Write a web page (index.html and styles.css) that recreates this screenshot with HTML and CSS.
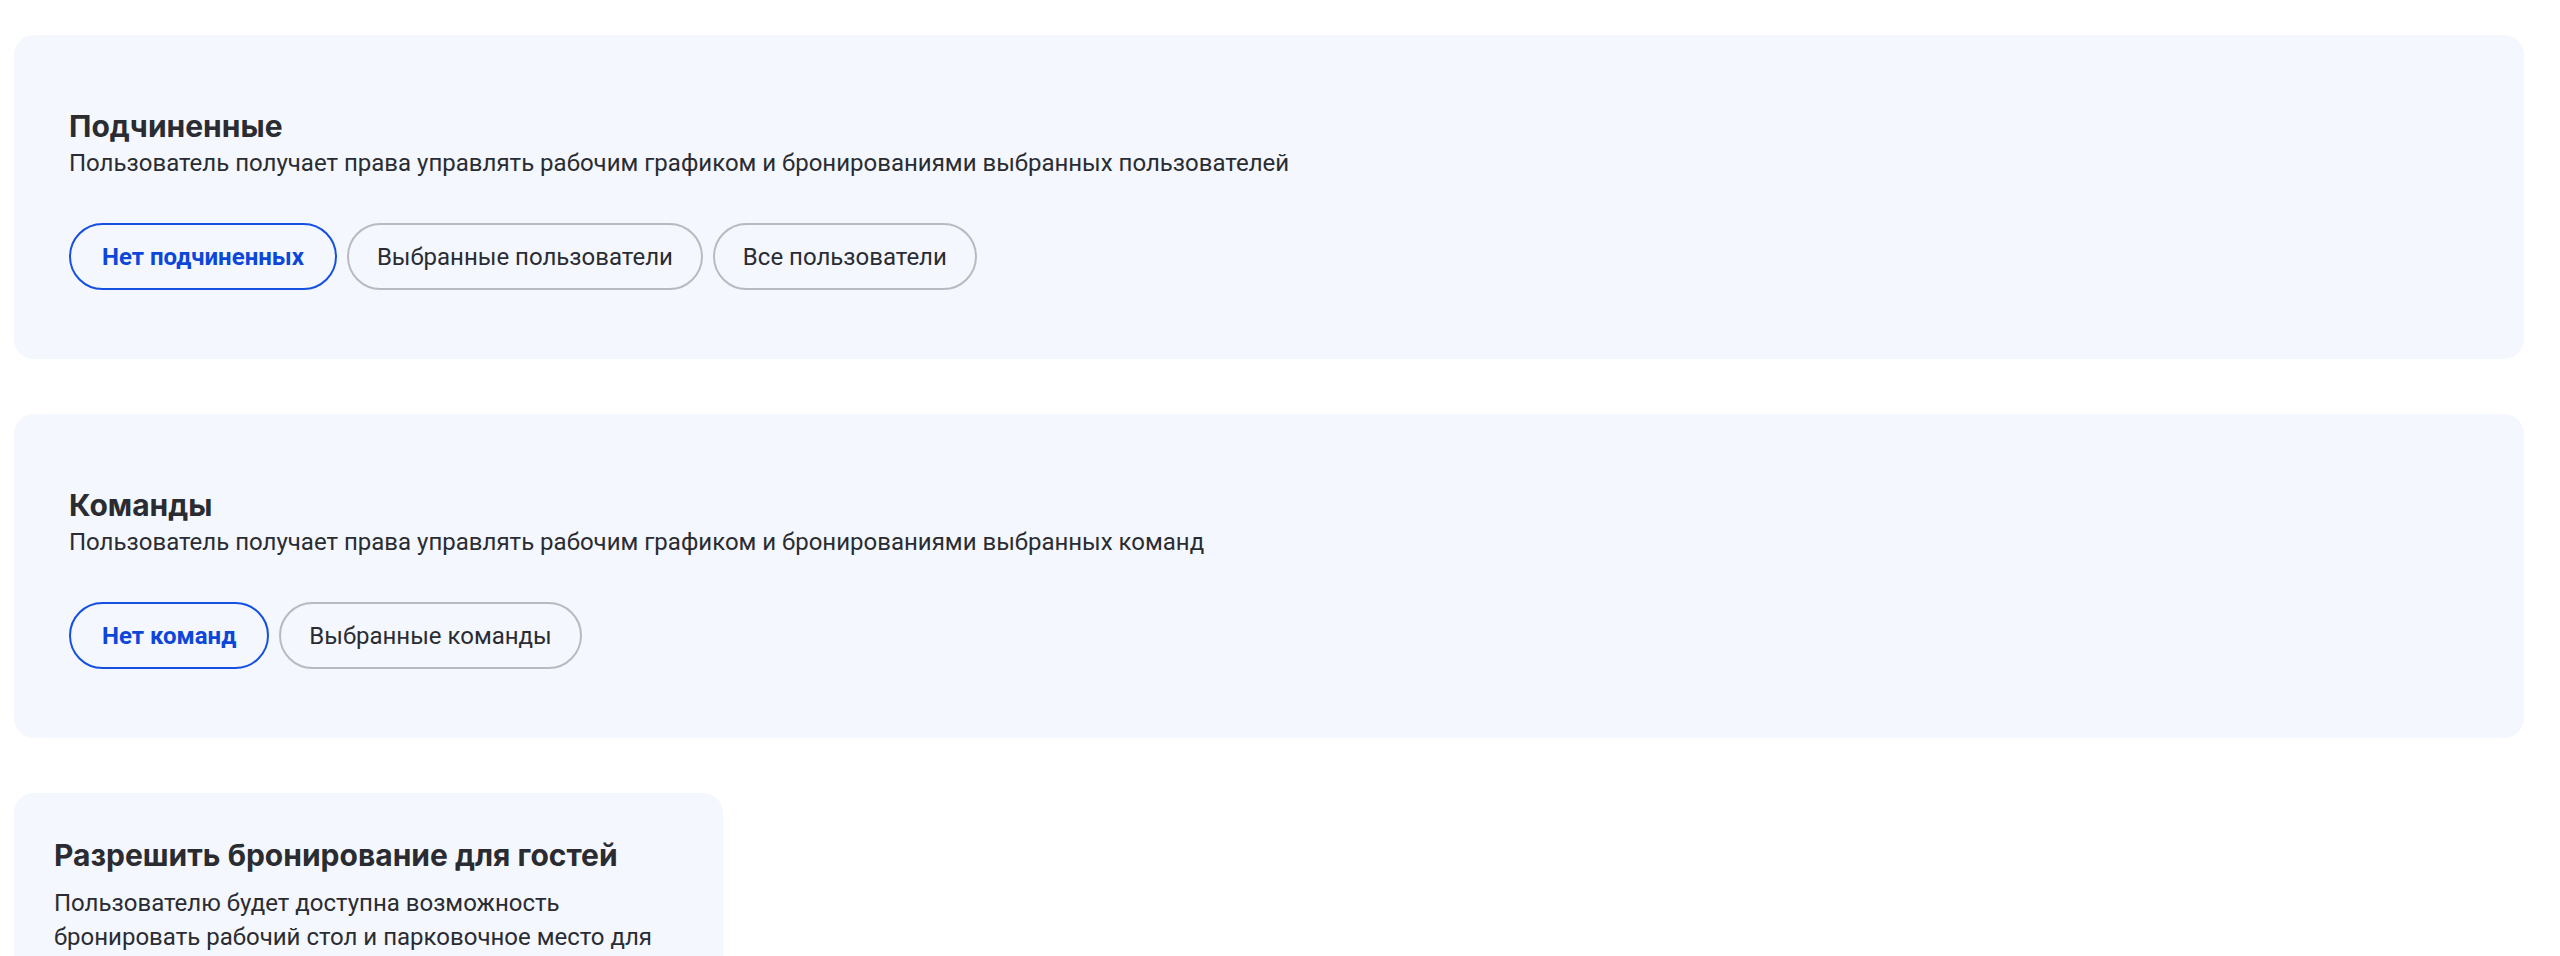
FILE: index.html
```html
<!DOCTYPE html>
<html lang="ru">
<head>
    <meta charset="UTF-8">
    <meta name="viewport" content="width=device-width, initial-scale=1.0">
    <title>Права пользователя</title>
    <link rel="stylesheet" href="styles.css">
</head>
<body>
    <div class="page">
        <section class="panel">
            <h2 class="panel-title">Подчиненные</h2>
            <p class="panel-text">Пользователь получает права управлять рабочим графиком и бронированиями выбранных пользователей</p>
            <div class="chips">
                <button type="button" class="chip active">Нет подчиненных</button>
                <button type="button" class="chip">Выбранные пользователи</button>
                <button type="button" class="chip">Все пользователи</button>
            </div>
        </section>

        <section class="panel">
            <h2 class="panel-title">Команды</h2>
            <p class="panel-text">Пользователь получает права управлять рабочим графиком и бронированиями выбранных команд</p>
            <div class="chips">
                <button type="button" class="chip active">Нет команд</button>
                <button type="button" class="chip">Выбранные команды</button>
            </div>
        </section>

        <section class="panel panel-small">
            <h2 class="panel-title">Разрешить бронирование для гостей</h2>
            <p class="panel-text">Пользователю будет доступна возможность бронировать рабочий стол и парковочное место для гостей</p>
        </section>
    </div>
</body>
</html>
```

FILE: styles.css
```css
body {
    margin: 0;
    font-family: Roboto, "Noto Sans", Arial, sans-serif;
    color: #2a2c32;
    background: #fff;
    overflow: hidden;
}
.page {
    display: flex;
    flex-direction: column;
    gap: 55px;
    padding: 35px 36px 0 14px;
}
.panel {
    background: #f4f7fd;
    border-radius: 20px;
    padding: 73px 55px 69px;
}
.panel-title {
    margin: 0;
    font-family: Inter, Roboto, sans-serif;
    font-size: 30px;
    line-height: 36px;
    font-weight: 700;
}
.panel-text {
    margin: 3px 0 0;
    font-size: 24px;
    line-height: 32px;
}
.chips {
    display: flex;
    gap: 10px;
    margin-top: 44px;
}
.chip {
    height: 67px;
    padding: 0 28px;
    border: 2px solid #b9bac0;
    border-radius: 999px;
    background: transparent;
    font-family: inherit;
    font-size: 24px;
    color: #2a2c32;
    cursor: pointer;
}
.chip.active {
    padding: 0 31px;
    border-color: #1550e0;
    color: #0d47d9;
    font-weight: 700;
}
/* narrow card for the guest booking switch */
.panel-small {
    align-self: flex-start;
    width: 629px;
    padding: 44px 40px 40px;
}
.panel-small .panel-text {
    margin-top: 13px;
    line-height: 34px;
}
```
